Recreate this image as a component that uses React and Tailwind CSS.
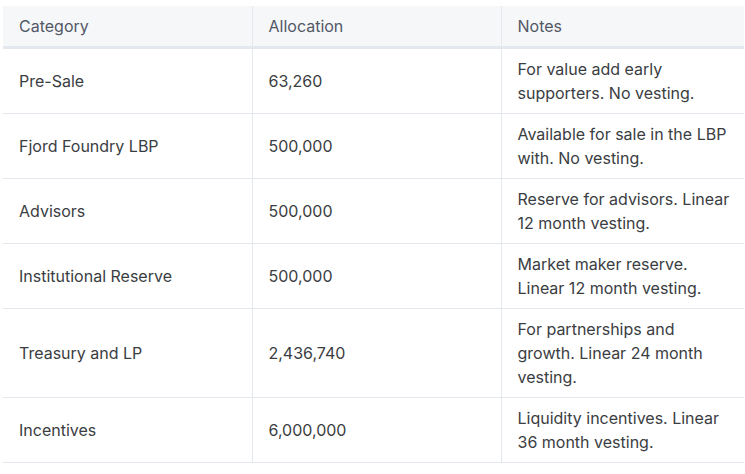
const rows = [
  { category: "Pre-Sale", allocation: "63,260", notes: "For value add early supporters. No vesting." },
  { category: "Fjord Foundry LBP", allocation: "500,000", notes: "Available for sale in the LBP with. No vesting." },
  { category: "Advisors", allocation: "500,000", notes: "Reserve for advisors. Linear 12 month vesting." },
  { category: "Institutional Reserve", allocation: "500,000", notes: "Market maker reserve. Linear 12 month vesting." },
  { category: "Treasury and LP", allocation: "2,436,740", notes: "For partnerships and growth. Linear 24 month vesting." },
  { category: "Incentives", allocation: "6,000,000", notes: "Liquidity incentives. Linear 36 month vesting." },
];

export default function App() {
  return (
    <div className="min-h-screen bg-white pt-[6px] pl-[3px] font-['Inter',sans-serif] text-[16px] leading-6">
      <table className="w-[741px] table-fixed border-collapse">
        <colgroup>
          <col className="w-[249px]" />
          <col className="w-[249px]" />
          <col />
        </colgroup>
        <thead>
          <tr className="bg-[#f6f7f9] border-b-[3px] border-[#e3e8ee]">
            <th className="px-4 py-2 text-left font-normal text-[#525866]">Category</th>
            <th className="px-4 py-2 text-left font-normal text-[#525866] border-l border-[#e3e8ee]">Allocation</th>
            <th className="pl-4 pr-3 py-2 text-left font-normal text-[#525866] border-l border-[#e3e8ee]">Notes</th>
          </tr>
        </thead>
        <tbody className="text-[#3a3d42]">
          {rows.map((row) => (
            <tr key={row.category} className="border-b border-[#e3e8ee]">
              <td className="px-4 py-2 align-middle">{row.category}</td>
              <td className="px-4 py-2 align-middle border-l border-[#e3e8ee]">{row.allocation}</td>
              <td className="pl-4 pr-3 py-2 align-middle border-l border-[#e3e8ee]">{row.notes}</td>
            </tr>
          ))}
        </tbody>
      </table>
    </div>
  );
}
